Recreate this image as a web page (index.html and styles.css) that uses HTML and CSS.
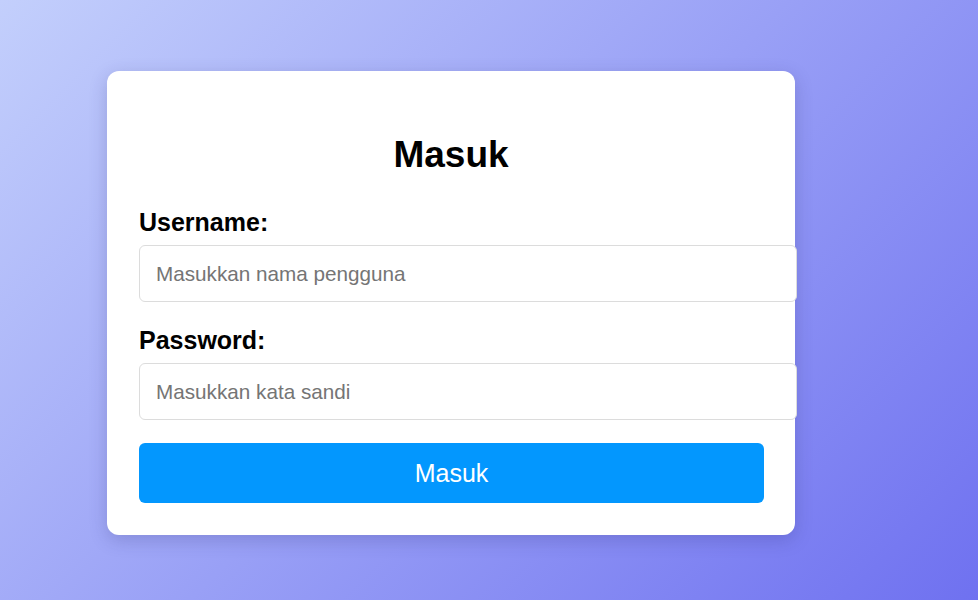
FILE: index.html
```html
<!DOCTYPE html>
<html lang="id">
<head>
<meta charset="utf-8">
<title>Masuk</title>
<link rel="stylesheet" href="styles.css">
</head>
<body>
  <div class="card">
    <h2 class="title">Masuk</h2>
    <form class="form">
      <label class="label" for="username">Username:</label>
      <input class="field" type="text" id="username" placeholder="Masukkan nama pengguna">
      <label class="label" for="password">Password:</label>
      <input class="field" type="password" id="password" placeholder="Masukkan kata sandi">
      <button class="btn" type="button">Masuk</button>
    </form>
  </div>
</body>
</html>
```
FILE: styles.css
```css
html, body {
  margin: 0;
  height: 100%;
}
body {
  font-family: "Liberation Sans", Arial, sans-serif;
  background: linear-gradient(135deg, #c3cffc 0%, #6f71f0 100%);
  padding: 71px 0 0 107px;
  box-sizing: border-box;
  overflow: hidden;
}
.card {
  width: 624px;
  padding: 32px;
  background: #ffffff;
  border-radius: 12px;
  box-shadow: 0 5px 18px rgba(40, 40, 110, 0.22);
}
.title {
  margin: 31px 0 32px;
  font-size: 37px;
  line-height: 42px;
  font-weight: bold;
  text-align: center;
  color: #000;
}
.form {
  margin: 0;
}
.label {
  display: block;
  font-size: 25px;
  line-height: 28px;
  font-weight: bold;
  color: #000;
  margin-bottom: 9px;
}
.field {
  display: block;
  box-sizing: content-box;
  width: 624px;
  height: 23px;
  margin: 0 0 24px;
  padding: 16px 16px;
  font-family: "Liberation Sans", Arial, sans-serif;
  font-size: 20.7px;
  line-height: 23px;
  border: 1px solid #dcdcdc;
  border-radius: 6px;
  color: #222;
  background: #fff;
  outline: none;
}
.field:last-of-type {
  margin-bottom: 23px;
}
.field::placeholder {
  color: #757575;
}
.btn {
  display: block;
  width: 625px;
  height: 60px;
  border: none;
  border-radius: 6px;
  background: #0397fe;
  color: #ffffff;
  font-family: "Liberation Sans", Arial, sans-serif;
  font-size: 25px;
  cursor: pointer;
}
```
